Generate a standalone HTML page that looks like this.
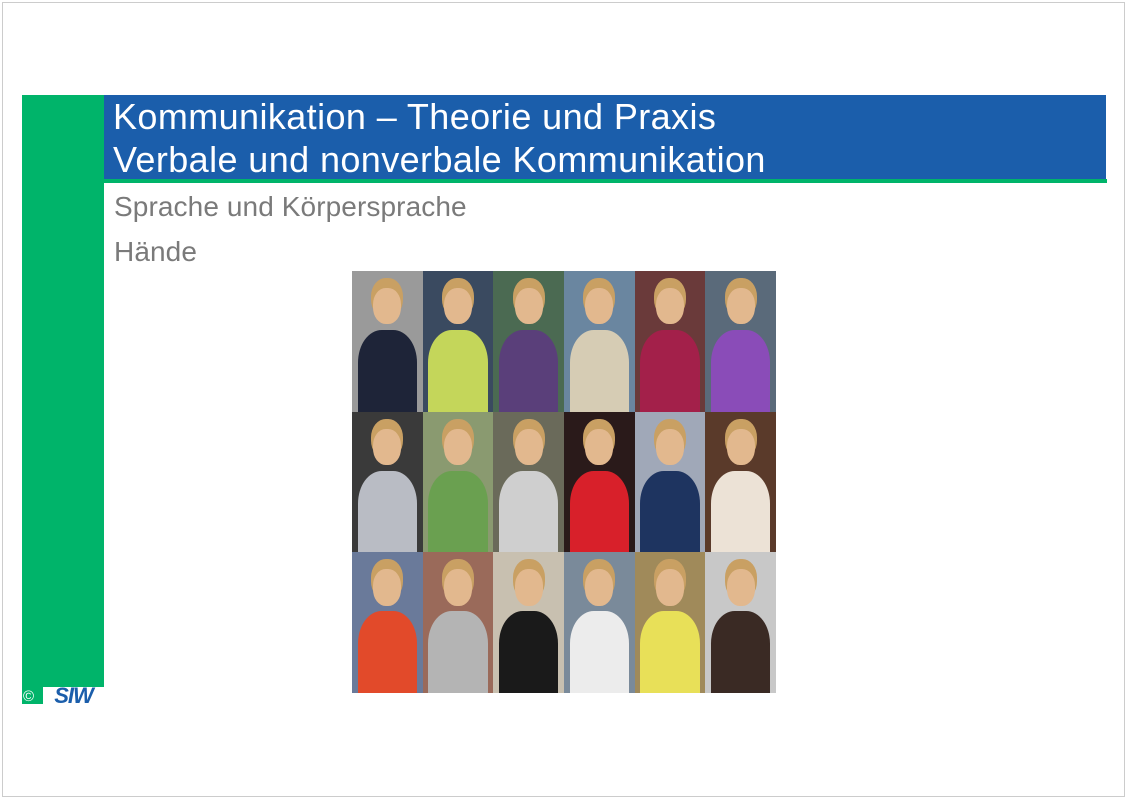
<!DOCTYPE html><html><head><meta charset="utf-8"><style>
body{margin:0;width:1128px;height:800px;background:#fff;position:relative;overflow:hidden;font-family:"Liberation Sans",Calibri,sans-serif}
.b{position:absolute;left:2px;top:2px;width:1123px;height:795px;border:1px solid #ccc;box-sizing:border-box}
.g{position:absolute;left:22px;top:95px;width:82px;height:609px;background:#00b46a}
.h{position:absolute;left:104px;top:95px;width:1002px;height:84px;background:#1b5eab;color:#fff;font-size:36px;line-height:43px;padding-left:9px;box-sizing:border-box;letter-spacing:0.4px;white-space:nowrap}
.l{position:absolute;left:104px;top:179px;width:1003px;height:4px;background:#00b46a}
.t{position:absolute;left:114px;color:#7a7a7a;font-size:28px;letter-spacing:0.1px}
.grid{position:absolute;left:352px;top:271px;width:424px;height:422px;display:grid;grid-template-columns:repeat(6,1fr);grid-template-rows:repeat(3,1fr)}
.c{position:relative;overflow:hidden}
.c i{position:absolute;left:30%;top:12%;width:40%;height:26%;border-radius:45%;background:#e2b88e;box-shadow:0 -8px 0 2px #c9a063}
.c b{position:absolute;left:8%;right:8%;bottom:0;height:58%;border-radius:40% 40% 0 0}
.logo{position:absolute;left:43px;top:687px;width:61px;height:17px;background:#fff;color:#1b5eab;font:italic 900 22px/17px "Liberation Sans",sans-serif;text-align:center;overflow:hidden;letter-spacing:-1px}
.cp{position:absolute;left:23px;top:688px;color:#fff;font-size:15px}
</style></head><body>
<div class="b"></div>
<div class="g"></div>
<div class="h">Kommunikation – Theorie und Praxis<br>Verbale und nonverbale Kommunikation</div>
<div class="l"></div>
<div class="t" style="top:191px">Sprache und Körpersprache</div>
<div class="t" style="top:236px">Hände</div>
<div class="grid">
<div class="c" style="background:#9a9a9a"><i></i><b style="background:#1e2438"></b></div>
<div class="c" style="background:#3a4a60"><i></i><b style="background:#c4d65a"></b></div>
<div class="c" style="background:#4b6a52"><i></i><b style="background:#5a3f7a"></b></div>
<div class="c" style="background:#6a86a0"><i></i><b style="background:#d6ccb4"></b></div>
<div class="c" style="background:#6a3a3a"><i></i><b style="background:#a3204a"></b></div>
<div class="c" style="background:#5a6a7a"><i></i><b style="background:#8a4cb8"></b></div>
<div class="c" style="background:#3a3a3a"><i></i><b style="background:#b9bcc4"></b></div>
<div class="c" style="background:#8a9a70"><i></i><b style="background:#6aa050"></b></div>
<div class="c" style="background:#6a6a5a"><i></i><b style="background:#cfcfcf"></b></div>
<div class="c" style="background:#2a1a1a"><i></i><b style="background:#d8202a"></b></div>
<div class="c" style="background:#a0a8b8"><i></i><b style="background:#1e3460"></b></div>
<div class="c" style="background:#5a3a2a"><i></i><b style="background:#ece2d6"></b></div>
<div class="c" style="background:#6a7a9a"><i></i><b style="background:#e24a2a"></b></div>
<div class="c" style="background:#9a6a5a"><i></i><b style="background:#b4b4b4"></b></div>
<div class="c" style="background:#c8c0b0"><i></i><b style="background:#1a1a1a"></b></div>
<div class="c" style="background:#7a8a9a"><i></i><b style="background:#ececec"></b></div>
<div class="c" style="background:#a08a5a"><i></i><b style="background:#e8e058"></b></div>
<div class="c" style="background:#c8c8c8"><i></i><b style="background:#3a2a24"></b></div>
</div>
<div class="cp">©</div>
<div class="logo">SIW</div>
</body></html>
